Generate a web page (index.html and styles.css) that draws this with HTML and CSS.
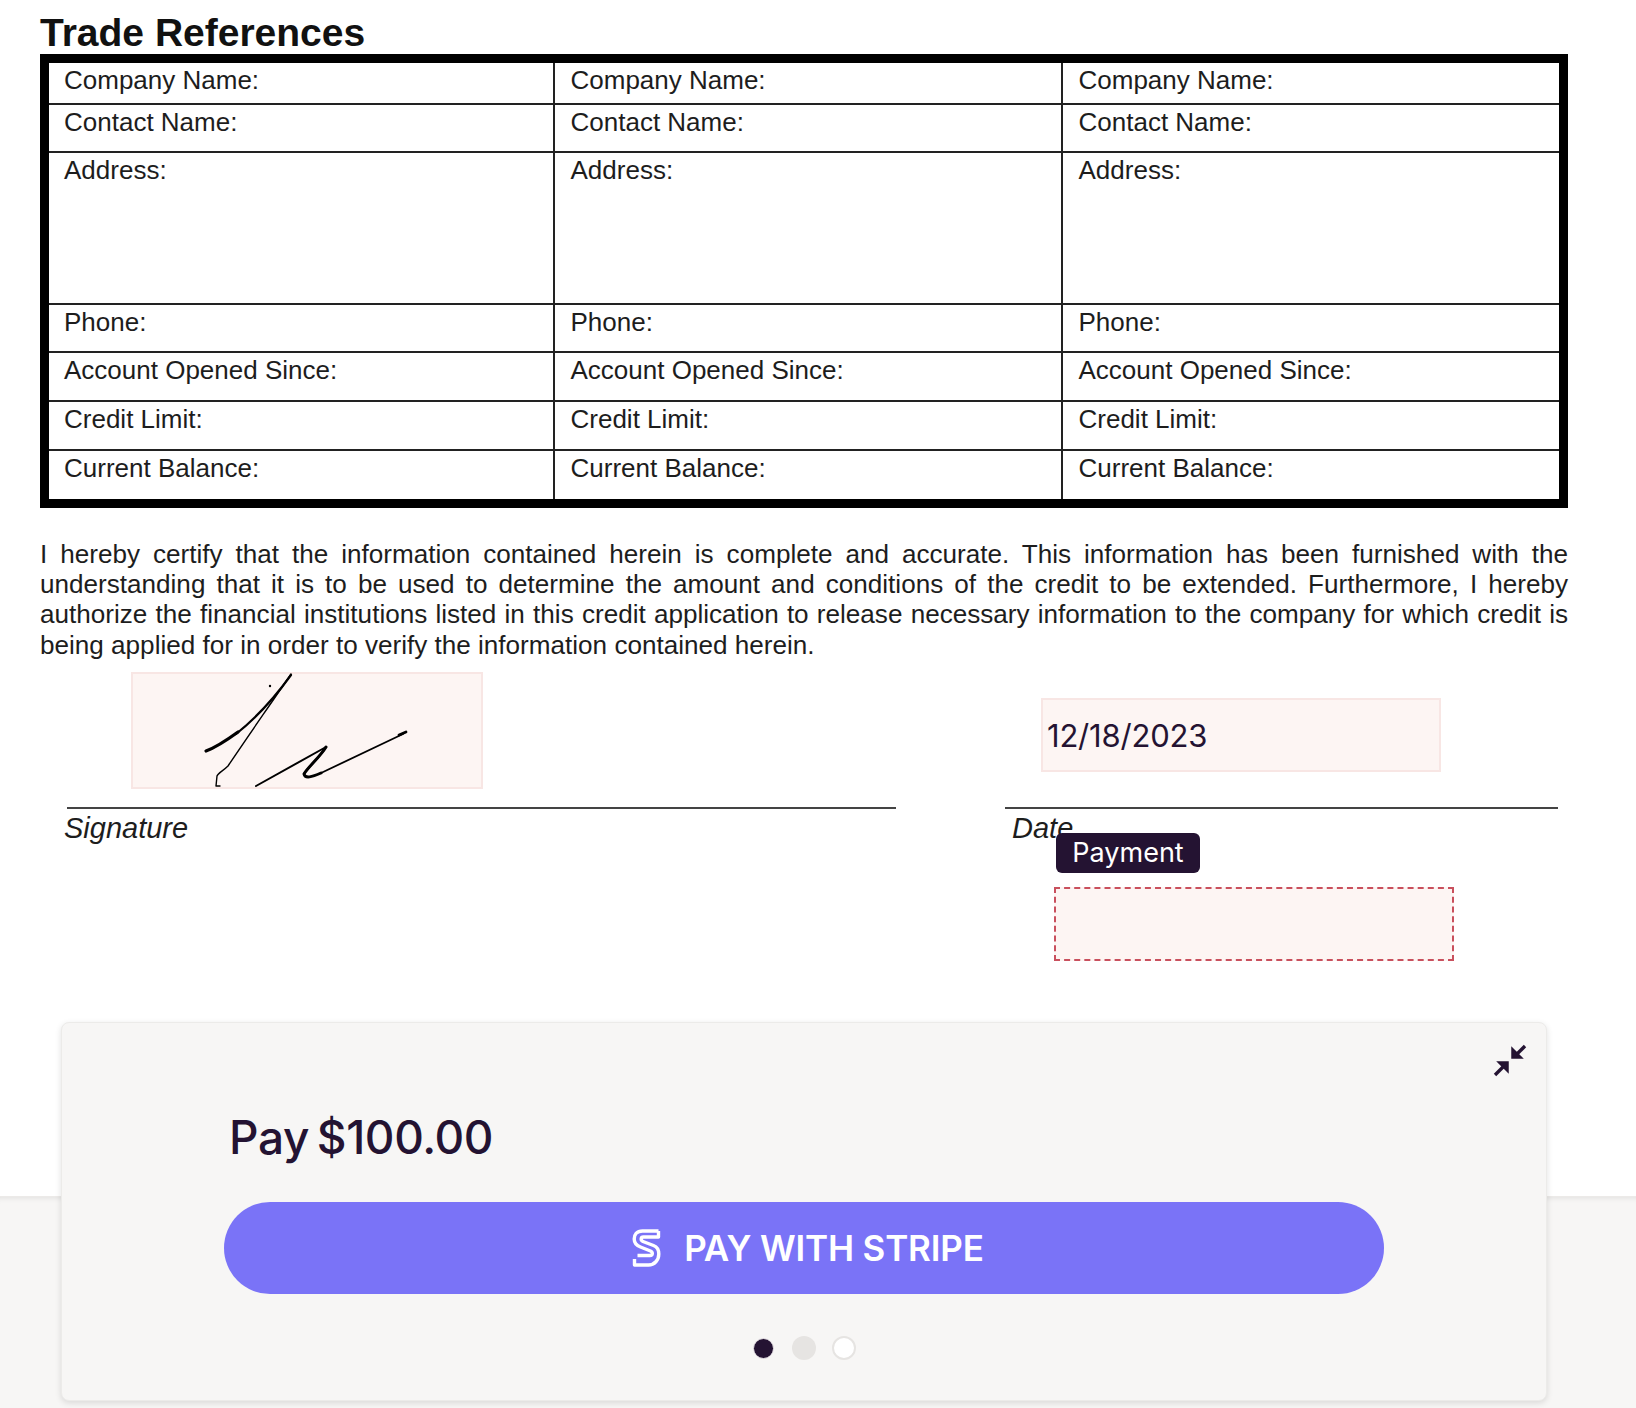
FILE: index.html
```html
<!DOCTYPE html>
<html lang="en">
<head>
    <meta charset="UTF-8">
    <title>Trade References</title>
    <link rel="stylesheet" href="styles.css">
</head>
<body>
    <div class="page">
        <div class="doc">
            <h1 class="doc-title">Trade References</h1>
            <table class="refs">
                <colgroup>
                    <col class="col-first">
                    <col class="col-mid">
                    <col class="col-last">
                </colgroup>
                <tr class="row-name"><td>Company Name:</td><td>Company Name:</td><td>Company Name:</td></tr>
                <tr class="row-contact"><td>Contact Name:</td><td>Contact Name:</td><td>Contact Name:</td></tr>
                <tr class="row-address"><td>Address:</td><td>Address:</td><td>Address:</td></tr>
                <tr class="row-phone"><td>Phone:</td><td>Phone:</td><td>Phone:</td></tr>
                <tr class="row-mid"><td>Account Opened Since:</td><td>Account Opened Since:</td><td>Account Opened Since:</td></tr>
                <tr class="row-mid"><td>Credit Limit:</td><td>Credit Limit:</td><td>Credit Limit:</td></tr>
                <tr class="row-last"><td>Current Balance:</td><td>Current Balance:</td><td>Current Balance:</td></tr>
            </table>
            <p class="certify">I hereby certify that the information contained herein is complete and accurate. This information has been furnished with the understanding that it is to be used to determine the amount and conditions of the credit to be extended. Furthermore, I hereby authorize the financial institutions listed in this credit application to release necessary information to the company for which credit is being applied for in order to verify the information contained herein.</p>
            <div class="sign-row">
                <div class="sign-col sign-col-name">Signature</div>
                <div class="sign-col sign-col-date">Date</div>
            </div>
        </div>
        <div class="band"></div>
    </div>

    <!-- fields sit on top of the document -->
    <div class="field field-signature">
        <svg class="signature" viewBox="0 0 352 117" fill="none" stroke="#000" stroke-linecap="round" stroke-linejoin="round">
            <path d="M160 2C139 33 117 64 97 94C92 99 87 101 86 104L85 114H89" stroke-width="1.4"/>
            <path d="M75 79C86 75 96 68 107 60" stroke-width="3.2"/>
            <path d="M105 62C125 46 142 28 160 3" stroke-width="2.2"/>
            <path d="M125 114L195 75C189 85 177 95 173 102" stroke-width="2"/>
            <path d="M195 75C189 85 177 95 173 102C174 107 181 105 190 101" stroke-width="3"/>
            <path d="M190 101L272 62" stroke-width="1.8"/>
            <path d="M268 63L275 60" stroke-width="2.8"/>
            <circle cx="139" cy="14" r="1.2" fill="#000" stroke="none"/>
        </svg>
    </div>
    <div class="field field-date">12/18/2023</div>
    <div class="field-tag">Payment</div>
    <div class="field field-payment"></div>

    <div class="pay-card">
        <div class="pay-top">
            <svg class="collapse-icon" viewBox="0 0 36 36" fill="#241332" stroke="#241332" stroke-width="3.4">
                <path d="M3 33L12 24"/>
                <path d="M6 20H16V30Z" stroke-width="1.5"/>
                <path d="M33 4L24 13"/>
                <path d="M20 6V16H30Z" stroke-width="1.5"/>
            </svg>
        </div>
        <div class="pay-body">
            <div class="pay-amount">Pay $100.00</div>
            <button class="pay-button">
                <svg class="stripe-icon" viewBox="0 0 28 38" fill="none" stroke="#fff" stroke-width="3.4" stroke-linejoin="round">
                    <path d="M26 2H10C4 2 1.700 6 1.700 10C1.700 14 4 16.500 8 18L18 22C20.500 23 20.500 26.500 17.500 26.500H5"/>
                    <path d="M26 2V8H11C8 8 8 11.500 10.500 12.500L21 16.500C25 18 26.300 21 26.300 25C26.300 31 22 36 16 36H2V30"/>
                </svg>
                <span>PAY WITH STRIPE</span>
            </button>
            <div class="pager">
                <span class="dot dot-active"></span>
                <span class="dot dot-grey"></span>
                <span class="dot dot-empty"></span>
            </div>
        </div>
    </div>
</body>
</html>
```

FILE: styles.css
```css
:root {
    --ink: #241332;
    --field-bg: #fdf5f3;
    --field-border: #f8e6e4;
    --panel-bg: #f7f6f5;
    --stripe: #7a73f7;
}

* {
    margin: 0;
    padding: 0;
    box-sizing: border-box;
}

body {
    width: 1636px;
    height: 1408px;
    overflow: hidden;
    position: relative;
    background: #fff;
    font-family: 'Liberation Sans', Arial, sans-serif;
}

.page {
    display: flex;
    flex-direction: column;
    height: 1408px;
}

.doc {
    height: 1196px;
    padding: 11px 68px 0 40px;
    color: #1d1d1d;
}

.doc-title {
    font-size: 39px;
    line-height: 43px;
    font-weight: 700;
    color: #111;
}

.refs {
    width: 1528px;
    height: 454px;
    border-collapse: collapse;
    table-layout: fixed;
    border: 9px solid #000;
}

.col-first { width: 509px; }
.col-mid { width: 508px; }
.col-last { width: 502px; }

.refs td {
    border: 2px solid #222;
    vertical-align: top;
    padding: 2px 10px 0 16px;
    font-size: 26px;
    line-height: 30px;
}

.refs td:first-child {
    padding-left: 15px;
}

.row-name { height: 45px; }
.row-contact { height: 48.500px; }
.row-address { height: 152px; }
.row-phone { height: 48px; }
.row-mid { height: 49px; }
.row-last { height: 53.500px; }

.certify {
    margin-top: 31px;
    font-size: 26.100px;
    line-height: 30.200px;
    text-align: justify;
}

.sign-row {
    display: flex;
    margin-top: 147px;
    font-size: 29px;
    font-style: italic;
    line-height: 34px;
}

.sign-col {
    border-top: 2px solid #444;
    padding-top: 2px;
}

.sign-col-name {
    width: 829px;
    margin-left: 27px;
    text-indent: -3px;
}

.sign-col-date {
    width: 553px;
    margin-left: 109px;
    padding-left: 7px;
}

.band {
    flex: 1;
    background: var(--panel-bg);
    border-top: 1px solid #eceae8;
    box-shadow: inset 0 6px 6px -6px rgba(0, 0, 0, 0.12);
}

.field {
    position: absolute;
    background: var(--field-bg);
    border: 2px solid var(--field-border);
}

.field-signature {
    left: 131px;
    top: 672px;
    width: 352px;
    height: 117px;
}

.signature {
    display: block;
    width: 352px;
    height: 117px;
    margin: -2px;
}

.field-date {
    left: 1041px;
    top: 698px;
    width: 400px;
    height: 74px;
    padding-left: 4px;
    font-family: Inter, sans-serif;
    font-size: 31px;
    line-height: 71px;
    letter-spacing: -0.2px;
    color: var(--ink);
}

.field-tag {
    position: absolute;
    left: 1056px;
    top: 833px;
    width: 144px;
    height: 40px;
    border-radius: 6px;
    background: var(--ink);
    color: #fff;
    font-family: Inter, sans-serif;
    font-size: 27px;
    line-height: 40px;
    text-align: center;
}

.field-payment {
    left: 1054px;
    top: 887px;
    width: 400px;
    height: 74px;
    border: 2px dashed #c9505d;
}

.pay-card {
    position: absolute;
    left: 61px;
    top: 1022px;
    width: 1486px;
    height: 379px;
    background: var(--panel-bg);
    border: 1px solid #ecebe9;
    border-radius: 8px;
    box-shadow: 0 2px 6px rgba(0, 0, 0, 0.12);
    color: var(--ink);
}

.pay-top {
    display: flex;
    justify-content: flex-end;
    padding: 19px 18px 0 0;
}

.collapse-icon {
    width: 36px;
    height: 36px;
}

.pay-body {
    display: flex;
    flex-direction: column;
    padding: 0 162px;
}

.pay-amount {
    margin-top: 31px;
    padding-left: 5px;
    font-family: Inter, sans-serif;
    font-size: 46px;
    font-weight: 500;
    line-height: 56px;
    letter-spacing: -0.4px;
    word-spacing: -4px;
}

.pay-button {
    display: flex;
    align-items: center;
    justify-content: center;
    gap: 23px;
    height: 92px;
    margin-top: 37px;
    padding-left: 8px;
    border: none;
    border-radius: 46px;
    background: var(--stripe);
    color: #fff;
    font-family: Inter, sans-serif;
    font-size: 35px;
    font-weight: 600;
    letter-spacing: -0.15px;
}

.stripe-icon {
    width: 29px;
    height: 38px;
}

.pager {
    display: flex;
    justify-content: center;
    align-items: center;
    gap: 16px;
    margin-top: 42px;
}

.dot {
    width: 24px;
    height: 24px;
    border-radius: 50%;
}

.dot-active {
    width: 21px;
    height: 21px;
    margin: 0 2px 0 1px;
    background: var(--ink);
    border: 1px solid #ebe6ea;
}

.dot-grey {
    background: #e6e4e2;
}

.dot-empty {
    background: #fff;
    border: 2px solid #e6e4e2;
}
```
